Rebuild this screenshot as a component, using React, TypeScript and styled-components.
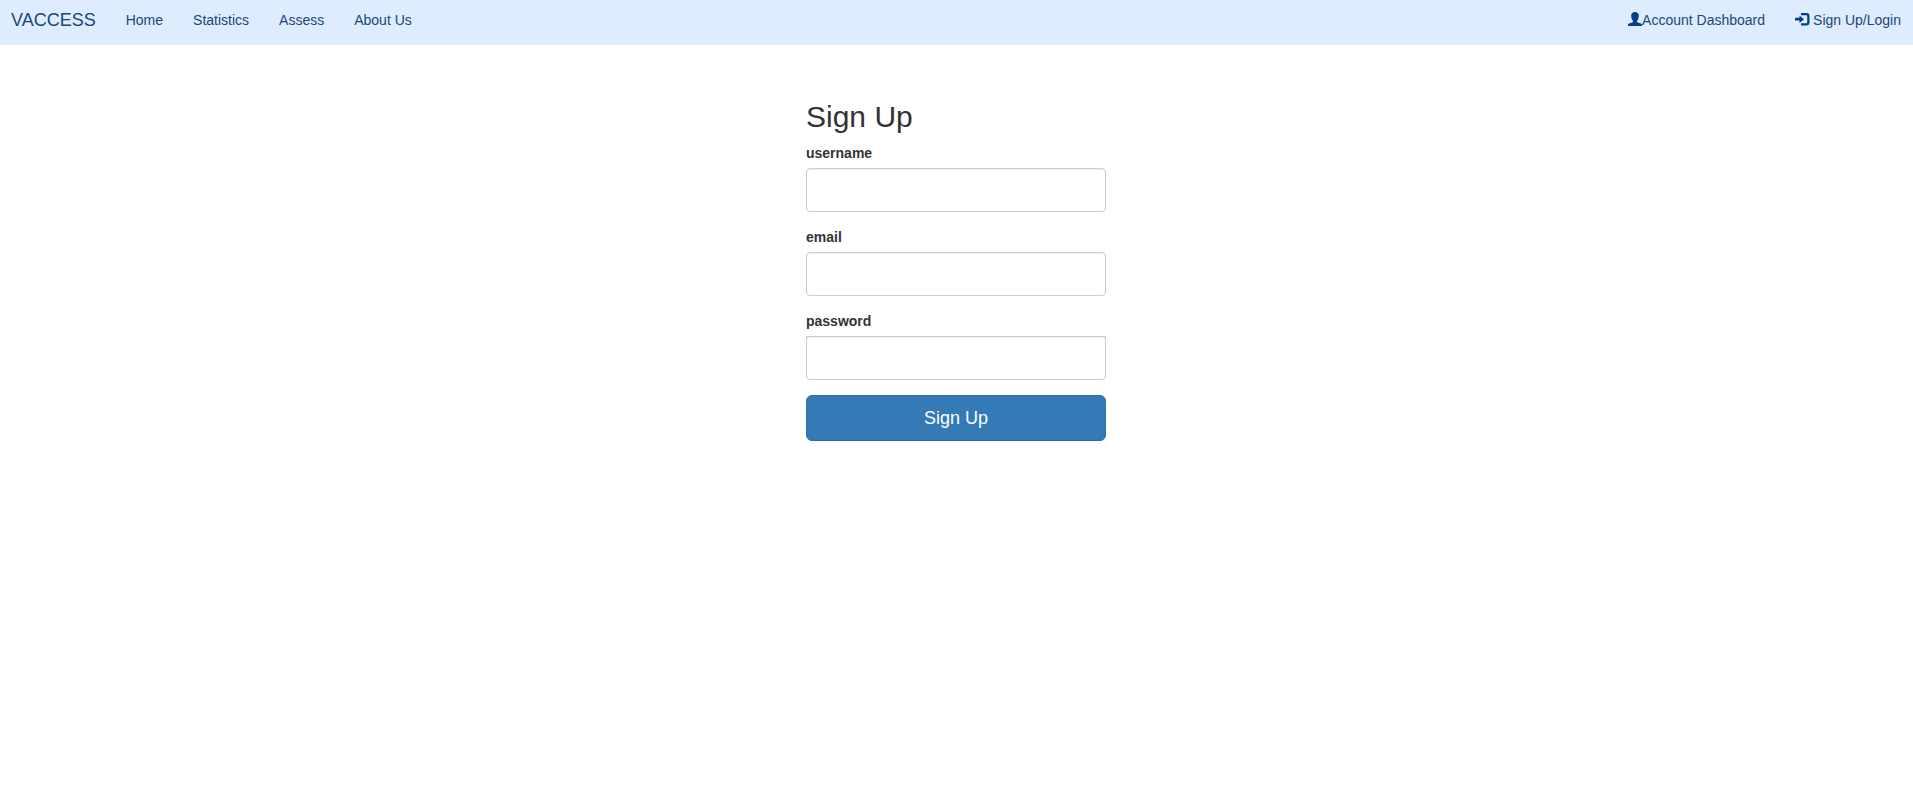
import React from "react";
import styled, { createGlobalStyle } from "styled-components";

const GlobalStyle = createGlobalStyle`
  *, *::before, *::after { box-sizing: border-box; }
  body {
    margin: 0;
    background: #fff;
    color: #333;
    font-family: "Liberation Sans", Arial, sans-serif;
    font-size: 14px;
    line-height: 20px;
  }
`;

const NavBar = styled.nav`
  display: flex;
  flex-wrap: wrap;
  justify-content: space-between;
  padding: 10px 12px 15px 11px;
  background: #deecff;
`;

const NavGroup = styled.div`
  display: flex;
  flex-wrap: wrap;
  gap: 0 30px;
`;

const NavLink = styled.a<{ $brand?: boolean; $iconGap?: number }>`
  display: flex;
  align-items: center;
  gap: ${(p) => p.$iconGap ?? 0}px;
  color: #1c4678;
  font-size: ${(p) => (p.$brand ? 18 : 14)}px;
  text-decoration: none;
`;

const Icon = styled.svg`
  width: 14px;
  height: 14px;
  flex: none;
  margin-bottom: 2px;
  overflow: visible;
  fill: #073f86;
`;

const Main = styled.main`
  padding: 40px 1px 40px 0;
`;

const Form = styled.form`
  max-width: 330px;
  margin: 0 auto;
  padding: 15px;
`;

const Heading = styled.h2`
  margin: 0 0 10px;
  font-size: 30px;
  font-weight: 500;
  line-height: 33px;
`;

const Field = styled.div`
  margin-bottom: 15px;
`;

const Label = styled.label`
  display: block;
  margin-bottom: 5px;
  font-weight: 700;
`;

const Input = styled.input<{ $flatTop?: boolean }>`
  display: block;
  width: 100%;
  height: 44px;
  padding: 10px;
  border: 1px solid #ccc;
  border-radius: ${(p) => (p.$flatTop ? "0 0 4px 4px" : "4px")};
  background: #fff;
  box-shadow: inset 0 1px 1px rgba(0, 0, 0, 0.075);
  color: #555;
  font: inherit;
  font-size: 16px;
`;

const SubmitButton = styled.button`
  display: block;
  width: 100%;
  padding: 10px 16px;
  border: 1px solid #2e6da4;
  border-radius: 6px;
  background: #337ab7;
  color: #fff;
  font-family: inherit;
  font-size: 18px;
  line-height: 24px;
  cursor: pointer;
`;

const links = ["Home", "Statistics", "Assess", "About Us"];

const fields = [
  { name: "username", type: "text" },
  { name: "email", type: "email" },
  { name: "password", type: "password" },
];

export default function App() {
  return (
    <>
      <GlobalStyle />
      <NavBar>
        <NavGroup>
          <NavLink $brand href="#">VACCESS</NavLink>
          {links.map((text) => (
            <NavLink key={text} href="#">{text}</NavLink>
          ))}
        </NavGroup>
        <NavGroup>
          <NavLink href="#">
            <Icon viewBox="0 0 14 14" aria-hidden="true">
              <path d="M7 0C4.600 0 3.200 1.300 3.200 3.500c0 1.300.2 2.500.5 3.300.3.900.8 1.600 1.300 2.100v.7c0 .4-.3.600-.7.800L1 11.600c-.7.300-1 .7-1 1.300V14h14v-1.100c0-.6-.3-1-1-1.300l-3.300-1.200c-.4-.2-.7-.4-.7-.8v-.7c.5-.5 1-1.200 1.300-2.100.3-.8.5-2 .5-3.300C10.800 1.300 9.400 0 7 0z" />
            </Icon>
            Account Dashboard
          </NavLink>
          <NavLink href="#" $iconGap={4}>
            <Icon viewBox="0 0 14 14" aria-hidden="true">
              <path d="M6 1h5.500a3 3 0 0 1 3 3v6.500a3 3 0 0 1-3 3H6v-2.300h5.200a1 1 0 0 0 1-1V4.300a1 1 0 0 0-1-1H6z" />
              <path d="M4.500 3.400 9 7.200l-4.500 3.800V8.600H.6a.6.600 0 0 1-.6-.6V6.400a.6.600 0 0 1 .6-.6h3.900z" />
            </Icon>
            Sign Up/Login
          </NavLink>
        </NavGroup>
      </NavBar>
      <Main>
        <Form onSubmit={(e) => e.preventDefault()}>
          <Heading>Sign Up</Heading>
          {fields.map(({ name, type }) => (
            <Field key={name}>
              <Label htmlFor={name}>{name}</Label>
              <Input id={name} name={name} type={type} $flatTop={name === "password"} />
            </Field>
          ))}
          <SubmitButton type="submit">Sign Up</SubmitButton>
        </Form>
      </Main>
    </>
  );
}
